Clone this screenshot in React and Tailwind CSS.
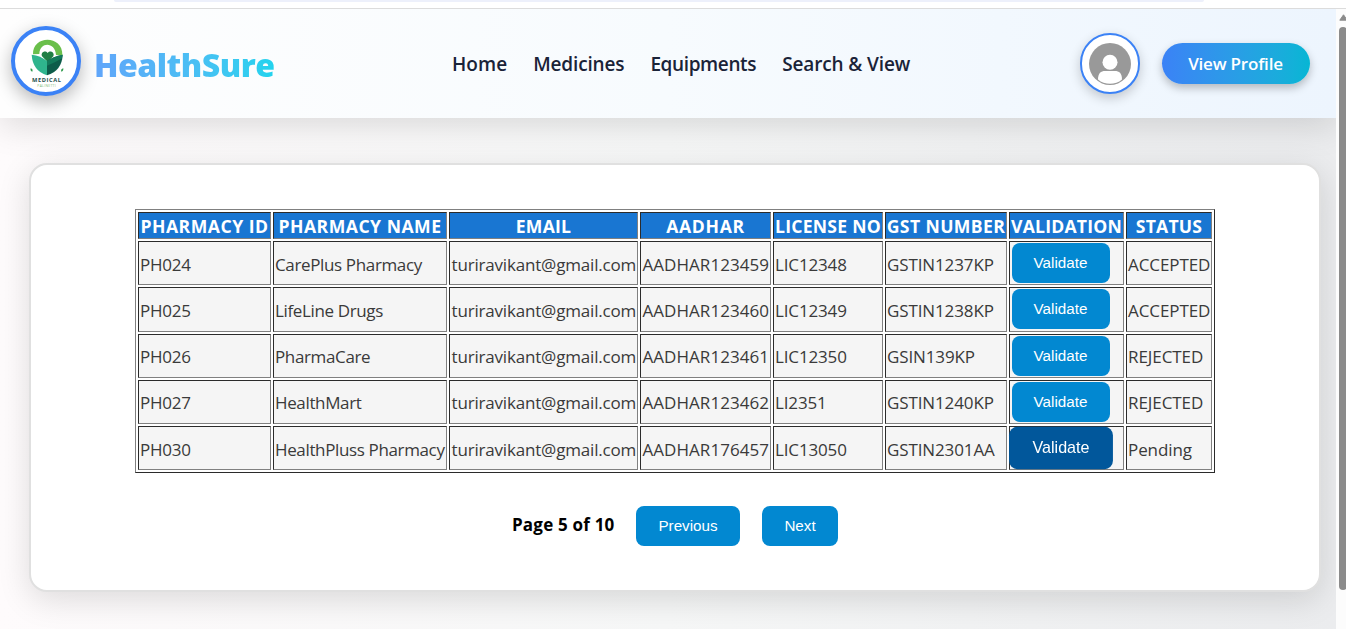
const navLinks = [
  { label: "Home", tracking: "tracking-[0.05px]" },
  { label: "Medicines", tracking: "tracking-[-0.15px]" },
  { label: "Equipments", tracking: "tracking-[-0.38px]" },
  { label: "Search & View", tracking: "tracking-[-0.12px]" },
];

const columns = [
  { label: "PHARMACY ID", width: "w-[133px]", tracking: "tracking-[0.5px]" },
  { label: "PHARMACY NAME", width: "w-[174px]", tracking: "tracking-[0.5px]" },
  { label: "EMAIL", width: "w-[189px]", tracking: "tracking-[0.2px]" },
  { label: "AADHAR", width: "w-[131px]", tracking: "tracking-[0.7px]" },
  { label: "LICENSE NO", width: "w-[110px]", tracking: "tracking-[0.25px]" },
  { label: "GST NUMBER", width: "w-[122px]", tracking: "tracking-[0.4px]" },
  { label: "VALIDATION", width: "w-[115px]", tracking: "tracking-[0.2px]" },
  { label: "STATUS", width: "w-[86px]", tracking: "tracking-[0.2px]" },
];

const email = "turiravikant@gmail.com";

const rows = [
  { id: "PH024", name: "CarePlus Pharmacy", aadhar: "AADHAR123459", license: "LIC12348", gst: "GSTIN1237KP", status: "ACCEPTED", height: "h-[44px]", pad: "pt-[3px]" },
  { id: "PH025", name: "LifeLine Drugs", aadhar: "AADHAR123460", license: "LIC12349", gst: "GSTIN1238KP", status: "ACCEPTED", height: "h-[45px]", pad: "pt-[2px]" },
  { id: "PH026", name: "PharmaCare", aadhar: "AADHAR123461", license: "LIC12350", gst: "GSIN139KP", status: "REJECTED", height: "h-[44px]", pad: "pt-px" },
  { id: "PH027", name: "HealthMart", aadhar: "AADHAR123462", license: "LI2351", gst: "GSTIN1240KP", status: "REJECTED", height: "h-[44px]", pad: "pt-px" },
  { id: "PH030", name: "HealthPluss Pharmacy", aadhar: "AADHAR176457", license: "LIC13050", gst: "GSTIN2301AA", status: "Pending", height: "h-[44px]", pad: "pt-[3px]", active: true },
];

const cellBorder = "border border-t-[#2b2b2b] border-l-[#2b2b2b] border-r-[#808080] border-b-[#808080]";

function Logo() {
  return (
    <div className="size-[70px] shrink-0 overflow-hidden rounded-full border-4 border-[#3b82f6] bg-white shadow-[0_6px_18px_rgba(0,0,0,0.28)]">
      <svg viewBox="45 61 186 186" className="size-full">
        <path d="M99 134C97 75 189 75 187 136H168C166 97 120 95 118 133Z" fill="#6abf4b" />
        <path d="M143 157L126 140C121 129 135 120 143 130C151 120 165 129 160 140Z" fill="#1f7f45" />
        <path d="M95 135Q122 138 141 154V197Q98 183 95 135Z" fill="#2fb48d" />
        <path d="M188 135Q160 140 141 154V197Q186 183 188 135Z" fill="#0d5c4a" />
        <path d="M188 135Q160 140 141 154V168Q168 158 186 146Z" fill="#13795a" />
        <path d="M92 176Q100 178 97 186Q90 185 92 176ZM190 176Q181 178 184 186Q191 185 190 176Z" fill="#2f9a4d" />
        <text x="96" y="218" fontSize="17" fontWeight="700" textLength="87" fill="#1e4e4c" fontFamily="Open Sans, sans-serif">MEDICAL</text>
        <text x="112" y="231" fontSize="10" textLength="55" fill="#7cba73" fontFamily="Open Sans, sans-serif">PALINETTI</text>
      </svg>
    </div>
  );
}

function Avatar() {
  return (
    <div className="flex h-[61px] w-[60px] items-center justify-center rounded-full border-2 border-[#3b82f6] bg-white shadow-[0_4px_12px_rgba(0,0,0,0.2)]">
      <svg viewBox="0 0 42 42" className="size-[42px]">
        <circle cx="21" cy="21" r="21" fill="#999" />
        <circle cx="21" cy="19.2" r="7.5" fill="#fff" />
        <path d="M9 36.5C9 30 12 28 16 28H26C30 28 33 30 33 36.5C26.5 42.3 15.5 42.3 9 36.5Z" fill="#fff" />
      </svg>
    </div>
  );
}

function Header() {
  return (
    <header className="relative z-10 flex h-[109px] shrink-0 items-center bg-linear-to-r from-[#fefefe] via-[#f7fbfe] to-[#edf5fe] pl-[11px] shadow-[0_8px_32px_rgba(0,0,0,0.13)]">
      <div className="flex w-[441px] items-center gap-[13px] pb-[5px]">
        <Logo />
        <span className="bg-linear-to-r from-[#60a5fa] to-[#22d3ee] bg-clip-text pt-[8px] text-[32px] leading-10 font-extrabold tracking-[-0.5px] text-transparent">
          HealthSure
        </span>
      </div>
      <nav className="flex w-[628px] gap-[26px] pt-[2px] text-[19px] font-semibold whitespace-nowrap text-[#1a2338]">
        {navLinks.map((link) => (
          <a key={link.label} className={link.tracking}>{link.label}</a>
        ))}
      </nav>
      <div className="flex items-center gap-[22px]">
        <Avatar />
        <button className="h-[41px] w-[148px] rounded-full bg-linear-to-r from-[#3b82f6] to-[#06b6d4] pt-px pr-px text-[17px] font-semibold tracking-[-0.2px] text-white shadow-[0_4px_8px_rgba(0,0,0,0.25)]">
          View Profile
        </button>
      </div>
    </header>
  );
}

function ValidateButton({ active }) {
  return (
    <button
      className={
        "block h-[40px] w-[98px] rounded-[8px] font-['Liberation_Sans',sans-serif] text-[15.2px] text-white " +
        (active ? "scale-[1.06] bg-[#01579b]" : "bg-[#0288d1] pr-px")
      }
    >
      Validate
    </button>
  );
}

function PharmacyTable() {
  const cell = cellBorder + " bg-[#f5f5f5] pr-0 pb-0 align-middle leading-6 whitespace-nowrap";
  return (
    <table className="w-[1080px] table-fixed border-separate border-spacing-[2px] border border-t-[#808080] border-r-[#2b2b2b] border-b-[#2b2b2b] border-l-[#808080] text-[17px] text-[#3a3a3a]">
      <thead>
        <tr className="h-[27px]">
          {columns.map((c) => (
            <th key={c.label} className={cellBorder + " bg-[#1976d2] p-0 pt-px text-center text-[17.6px] leading-6 font-bold whitespace-nowrap text-white " + c.width + " " + c.tracking}>
              {c.label}
            </th>
          ))}
        </tr>
      </thead>
      <tbody>
        {rows.map((r) => {
          const base = cell + " " + r.pad;
          return (
            <tr key={r.id} className={r.height}>
              <td className={base + " pl-px tracking-[-0.25px]"}>{r.id}</td>
              <td className={base + " pl-px tracking-[-0.36px]"}>{r.name}</td>
              <td className={base + " pl-[1.5px] tracking-[-0.18px]"}>{email}</td>
              <td className={base + " pl-[1.5px] tracking-[0.05px]"}>{r.aadhar}</td>
              <td className={base + " pl-px tracking-[-0.15px]"}>{r.license}</td>
              <td className={base + " pl-px tracking-[-0.12px]"}>{r.gst}</td>
              <td className={cellBorder + " bg-[#f5f5f5] p-px pl-[2px] align-top"}>
                <ValidateButton active={r.active} />
              </td>
              <td className={base + " pl-px tracking-[-0.08px]"}>{r.status}</td>
            </tr>
          );
        })}
      </tbody>
    </table>
  );
}

function Pagination() {
  const button = "h-[40px] rounded-[8px] bg-[#0288d1] font-['Liberation_Sans',sans-serif] text-[15.2px] text-white";
  return (
    <div className="mt-[33px] flex items-center pl-[377px]">
      <span className="w-[124px] pb-[3px] text-[17px] font-bold tracking-[0.2px] whitespace-nowrap text-black">Page 5 of 10</span>
      <button className={button + " w-[104px]"}>Previous</button>
      <button className={button + " ml-[22px] w-[76px]"}>Next</button>
    </div>
  );
}

function Scrollbar() {
  return (
    <div className="flex w-[10px] shrink-0 flex-col items-start overflow-hidden bg-[#fcfcfc] pt-[5px] pl-[3px]">
      <svg viewBox="0 0 9 7" className="h-[7px] w-[9px] shrink-0">
        <path d="M4.5 0.8L8.2 6.2H0.8Z" fill="#8b8b8b" stroke="#8b8b8b" strokeLinejoin="round" />
      </svg>
      <div className="mt-[6px] h-[563px] w-[8px] shrink-0 rounded-full bg-[#8b8b8b]" />
    </div>
  );
}

export default function App() {
  return (
    <div className="flex h-[629px] w-[1346px] flex-col overflow-hidden bg-white font-['Open_Sans',sans-serif]">
      <div className="h-[9px] shrink-0 border-b border-[#dcdcdc] pl-[114px]">
        <div className="h-[2px] w-[1090px] rounded-b-[8px] bg-[#edf0fb]" />
      </div>
      <div className="flex min-h-0 flex-1">
        <div className="flex w-[1336px] flex-col overflow-hidden bg-linear-to-r from-[#fefbfc] via-[#f6f7f7] to-[#ebecee]">
          <Header />
          <main className="mt-[45px] ml-[29px] h-[429px] w-[1292px] shrink-0 rounded-[18px] border-2 border-[#e0e0e0] bg-white pt-[44px] pl-[104px] shadow-[0_8px_32px_rgba(0,0,0,0.13)]">
            <PharmacyTable />
            <Pagination />
          </main>
        </div>
        <Scrollbar />
      </div>
    </div>
  );
}
